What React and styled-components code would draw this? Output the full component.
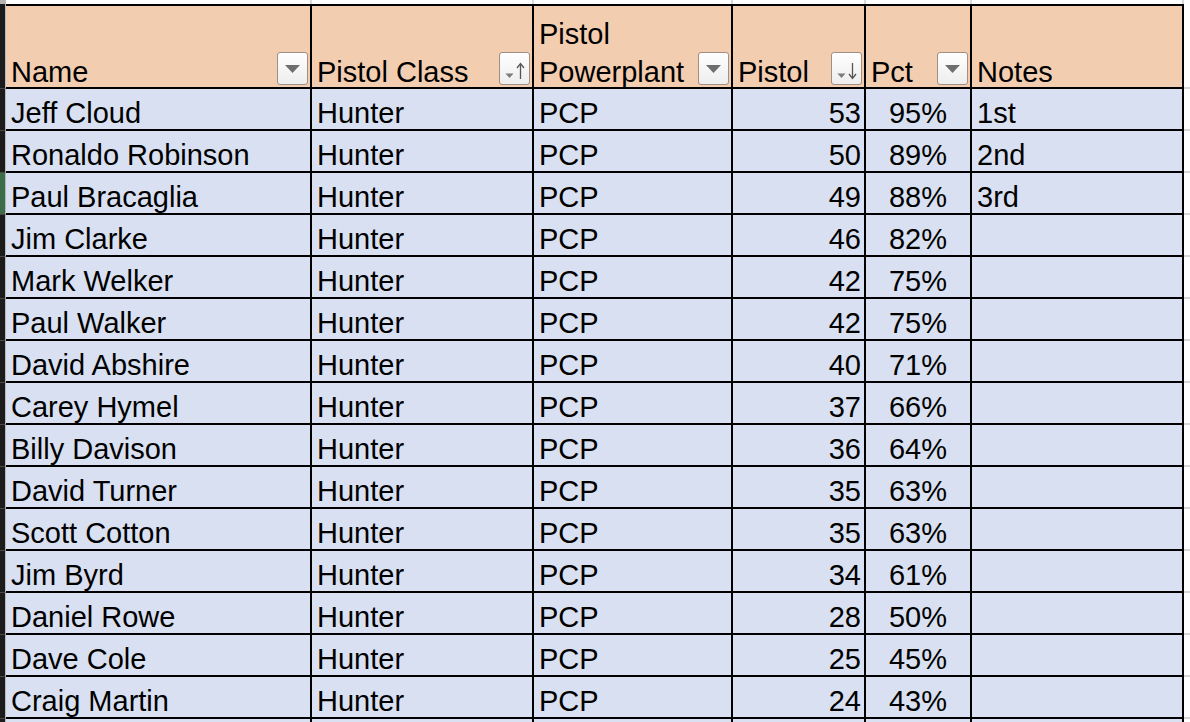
import React from "react";
import styled, { createGlobalStyle } from "styled-components";

const GlobalStyle = createGlobalStyle`
  html, body {
    margin: 0;
    padding: 0;
    background: #ffffff;
    overflow: hidden;
  }
  body {
    width: 1190px;
    height: 722px;
    font-family: "Liberation Sans", Arial, sans-serif;
  }
`;

const rows = [
  ["Jeff Cloud", 53, "95%", "1st"],
  ["Ronaldo Robinson", 50, "89%", "2nd"],
  ["Paul Bracaglia", 49, "88%", "3rd"],
  ["Jim Clarke", 46, "82%", ""],
  ["Mark Welker", 42, "75%", ""],
  ["Paul Walker", 42, "75%", ""],
  ["David Abshire", 40, "71%", ""],
  ["Carey Hymel", 37, "66%", ""],
  ["Billy Davison", 36, "64%", ""],
  ["David Turner", 35, "63%", ""],
  ["Scott Cotton", 35, "63%", ""],
  ["Jim Byrd", 34, "61%", ""],
  ["Daniel Rowe", 28, "50%", ""],
  ["Dave Cole", 25, "45%", ""],
  ["Craig Martin", 24, "43%", ""],
];

const headers = [
  { label: "Name", filter: "plain" },
  { label: "Pistol Class", filter: "up" },
  { label: "Pistol Powerplant", filter: "plain" },
  { label: "Pistol", filter: "down" },
  { label: "Pct", filter: "plain" },
  { label: "Notes", filter: null },
];

const SELECTED_ROW = 2;

export default function App() {
  return (
    <>
      <GlobalStyle />
      <Sheet>
        {/* strip above the table */}
        <Gutter $top />
        {headers.map((h) => (
          <TopCell key={h.label} />
        ))}
        <Filler $top />

        {/* header row */}
        <Gutter />
        {headers.map((h) => (
          <HeadCell key={h.label}>
            <HeadLabel>{h.label}</HeadLabel>
            {h.filter && <FilterButton kind={h.filter} />}
          </HeadCell>
        ))}
        <Filler />

        {rows.map((r, i) => (
          <React.Fragment key={r[0]}>
            <Gutter $selected={i === SELECTED_ROW} />
            <Cell>{r[0]}</Cell>
            <Cell>Hunter</Cell>
            <Cell>PCP</Cell>
            <Cell $align="right">{r[1]}</Cell>
            <Cell $align="center">{r[2]}</Cell>
            <Cell>{r[3]}</Cell>
            <Filler />
          </React.Fragment>
        ))}

        {/* partly visible next row */}
        <Gutter />
        {headers.map((h) => (
          <Cell key={h.label} />
        ))}
        <Filler />
      </Sheet>
    </>
  );
}

function FilterButton({ kind }) {
  return (
    <Button>
      {kind === "plain" ? (
        <svg width="31" height="33" viewBox="0 0 31 33">
          <path d="M8 13 L23 13 L15.5 21 Z" fill="#6e6e6e" />
        </svg>
      ) : (
        <svg width="31" height="33" viewBox="0 0 31 33">
          <path d="M6.5 21.5 L14.5 21.5 L10.5 26 Z" fill="#7a7a7a" />
          {kind === "up" ? (
            <>
              <line x1="21.5" y1="12" x2="21.5" y2="27" stroke="#555" strokeWidth="1.3" />
              <path d="M18 16 L21.5 11.5 L25 16" fill="none" stroke="#555" strokeWidth="1.3" />
            </>
          ) : (
            <>
              <line x1="21.5" y1="11" x2="21.5" y2="26" stroke="#555" strokeWidth="1.3" />
              <path d="M18 22 L21.5 26.5 L25 22" fill="none" stroke="#555" strokeWidth="1.3" />
            </>
          )}
        </svg>
      )}
    </Button>
  );
}

const Sheet = styled.div`
  display: grid;
  grid-template-columns: 6px 306px 222px 199px 133px 106px 212px 1fr;
  grid-template-rows: 4px 85px;
  grid-auto-rows: 42px;
  width: 1190px;
  height: 722px;
  overflow: hidden;
  font-family: "Liberation Sans", Arial, sans-serif;
  color: #000;
`;

const Gutter = styled.div`
  box-sizing: border-box;
  background: ${(p) => (p.$top ? "#b4b4b4" : p.$selected ? "#3d6c49" : "#1c1c1c")};
  border-right: 1px solid #b8b8b8;
  border-bottom: ${(p) => (p.$top ? "none" : "1px solid #4a4a4a")};
`;

const TopCell = styled.div`
  box-sizing: border-box;
  background: #ffffff;
  border-right: 2px solid #dadada;
`;

const Filler = styled.div`
  box-sizing: border-box;
  background: #ffffff;
  border-bottom: ${(p) => (p.$top ? "none" : "2px solid #d6d6d6")};
`;

const HeadCell = styled.div`
  box-sizing: border-box;
  display: flex;
  align-items: flex-end;
  background: #f3cdb0;
  border-top: 2px solid #000;
  border-bottom: 2px solid #000;
  border-right: 2px solid #000;
  padding-left: 5px;
  font-size: 29px;
`;

const HeadLabel = styled.div`
  flex: 1;
  min-width: 0;
  line-height: 38px;
  margin-bottom: -4px;
  white-space: normal;
`;

const Button = styled.div`
  box-sizing: border-box;
  flex-shrink: 0;
  width: 31px;
  height: 33px;
  margin: 0 2px 2px 0;
  border: 1px solid #a08f82;
  border-radius: 3px;
  background: linear-gradient(#ffffff, #ededed);
  display: flex;
  align-items: center;
  justify-content: center;
  overflow: hidden;

  svg {
    display: block;
    flex-shrink: 0;
  }
`;

const Cell = styled.div`
  box-sizing: border-box;
  display: flex;
  align-items: flex-end;
  justify-content: ${(p) =>
    p.$align === "right" ? "flex-end" : p.$align === "center" ? "center" : "flex-start"};
  background: #d9e0f1;
  border-bottom: 2px solid #000;
  border-right: 2px solid #000;
  padding: 0 ${(p) => (p.$align === "right" ? "3px" : "0")} 0
    ${(p) => (p.$align === "right" || p.$align === "center" ? "0" : "5px")};
  font-size: 29px;
  line-height: 32px;
  white-space: nowrap;
`;
